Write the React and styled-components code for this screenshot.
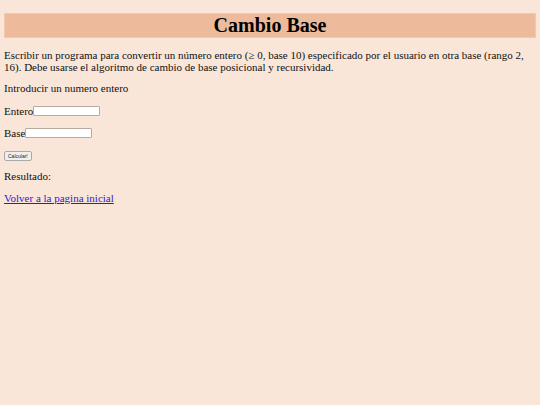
import React from 'react'
import styled, { createGlobalStyle } from 'styled-components'

const GlobalStyle = createGlobalStyle`
	html, body {
		margin: 0;
		background-color: #f9e6d8;
	}
	body {
		padding: 4px;
		font-family: "Liberation Serif", "Times New Roman", serif;
		font-size: 11px;
		color: #111;
	}
`

const Header = styled.h1`
	margin: 9px 0 0 0;
	padding: 0;
	height: 23px;
	line-height: 23px;
	background-color: #edbb9b;
	border: 1px solid #f2c9ab;
	text-align: center;
	font-family: "Liberation Serif", "Times New Roman", serif;
	font-size: 20px;
	font-weight: bold;
	color: #000;
`

const Text = styled.p`
	margin: ${p => p.$top || 10}px 0 0 0;
	line-height: 12px;
`

const Field = styled.div`
	display: flex;
	align-items: center;
	margin-top: ${p => p.$top || 10}px;
	line-height: 12px;
`

const Input = styled.input`
	box-sizing: border-box;
	width: 67px;
	height: 10px;
	padding: 0;
	margin: 0;
	border: 1px solid #b9aaa0;
	background: #fff;
	border-radius: 1px;
`

const Button = styled.button`
	margin-top: 12px;
	height: 10px;
	padding: 0 3px;
	font-family: "Liberation Sans", Arial, sans-serif;
	font-size: 5px;
	line-height: 8px;
	border: 1px solid #aaa;
	border-radius: 2px;
	background: #efefef;
	color: #222;
	display: block;
`

const Link = styled.a`
	color: #2a1bd6;
	text-decoration: underline;
`

const App = () => {
	return (
		<>
			<GlobalStyle />
			<Header>Cambio Base</Header>
			<Text $top={11}>
				Escribir un programa para convertir un número entero (≥ 0, base 10) especificado por el usuario en otra base (rango 2, 16). Debe usarse el algoritmo de cambio de base posicional y recursividad.
			</Text>
			<Text $top={9}>Introducir un numero entero</Text>
			<Field $top={11}>Entero<Input type="text" /></Field>
			<Field $top={10}>Base<Input type="text" /></Field>
			<Button>Calcular!</Button>
			<Text $top={9}>Resultado:</Text>
			<Text $top={10}><Link href="#">Volver a la pagina inicial</Link></Text>
		</>
	)
}

export default App
